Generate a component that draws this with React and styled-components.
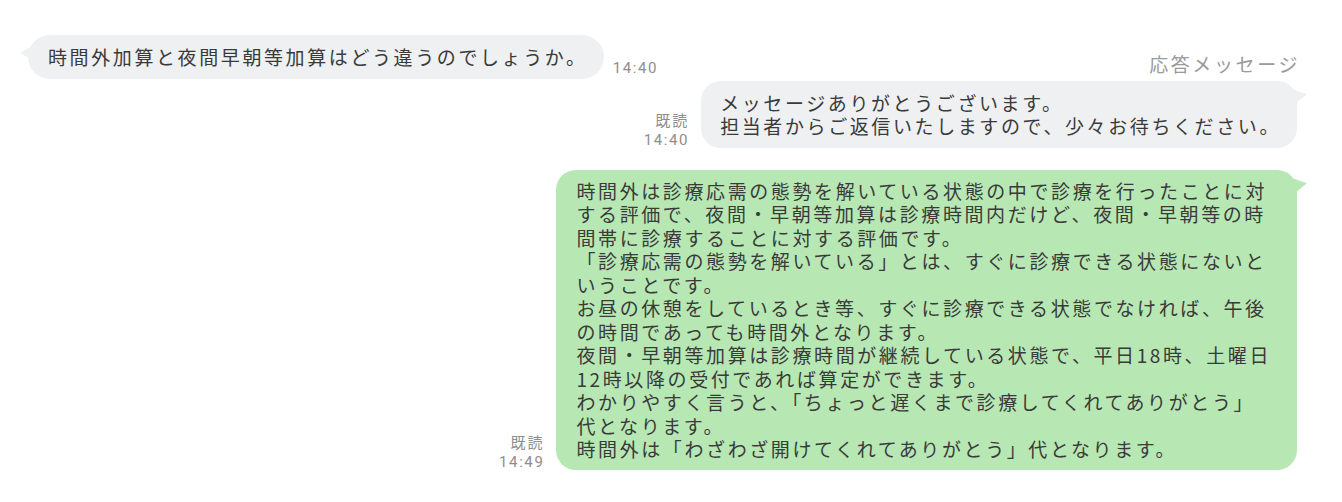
import React from 'react';
import styled, { createGlobalStyle } from 'styled-components';

const GlobalStyle = createGlobalStyle`
    html, body {
        margin: 0;
        padding: 0;
        background: #ffffff;
    }
    body {
        font-family: "Noto Sans CJK JP", "Noto Sans", sans-serif;
        color: #333333;
    }
`;

const Page = styled.div`
    width: 1342px;
    height: 502px;
    box-sizing: border-box;
    padding: 35px 45px 0 28px;
    display: flex;
    flex-direction: column;
    overflow: hidden;
`;

const Row = styled.div`
    display: flex;
    align-items: flex-end;
    justify-content: ${(p) => (p.$mine ? 'flex-end' : 'flex-start')};
    margin-top: ${(p) => p.$gap || 0}px;
`;

const ReplyGroup = styled.div`
    display: flex;
    flex-direction: column;
    margin-top: -27px;
`;

const AutoLabel = styled.div`
    align-self: flex-end;
    font-size: 19px;
    letter-spacing: 2.6px;
    line-height: 24px;
    color: #9a9a9a;
    margin-right: -3px;
`;

const Bubble = styled.div`
    position: relative;
    box-sizing: border-box;
    background: ${(p) => (p.$green ? '#b7e8b4' : '#eef0f2')};
    border-radius: ${(p) => (p.$pill ? '22px' : '20px')};
    padding: ${(p) => p.$pad};
    font-size: 19px;
    letter-spacing: 2.6px;
    line-height: 23.5px;
    color: #3a3a3a;
    white-space: nowrap;

    &::after {
        content: '';
        position: absolute;
        top: ${(p) => (p.$mine ? '9px' : '10px')};
        ${(p) => (p.$mine ? 'right: -10px;' : 'left: -8px;')}
        width: 14px;
        height: 16px;
        background: inherit;
        clip-path: ${(p) =>
            p.$mine
                ? 'polygon(0 0, 100% 30%, 0 100%)'
                : 'polygon(100% 0, 0 50%, 100% 100%)'};
    }
`;

const Line = styled.div``;

const Meta = styled.div`
    display: flex;
    flex-direction: column;
    align-items: ${(p) => (p.$mine ? 'flex-end' : 'flex-start')};
    margin: ${(p) => (p.$mine ? '0 12px -2px 0' : '0 0 1px 9px')};
    font-family: "Noto Sans CJK JP", Roboto, sans-serif;
    font-size: 15px;
    letter-spacing: 2px;
    line-height: 20px;
    color: #8e8e8e;
`;

const Time = styled.span`
    font-family: Roboto, "Liberation Sans", sans-serif;
    font-size: 15px;
    letter-spacing: 1.6px;
`;

const answer = [
    '時間外は診療応需の態勢を解いている状態の中で診療を行ったことに対',
    'する評価で、夜間・早朝等加算は診療時間内だけど、夜間・早朝等の時',
    '間帯に診療することに対する評価です。',
    '「診療応需の態勢を解いている」とは、すぐに診療できる状態にないと',
    'いうことです。',
    'お昼の休憩をしているとき等、すぐに診療できる状態でなければ、午後',
    'の時間であっても時間外となります。',
    '夜間・早朝等加算は診療時間が継続している状態で、平日18時、土曜日',
    '12時以降の受付であれば算定ができます。',
    'わかりやすく言うと、「ちょっと遅くまで診療してくれてありがとう」',
    '代となります。',
    '時間外は「わざわざ開けてくれてありがとう」代となります。',
];

const App = () => (
    <>
        <GlobalStyle />
        <Page>
            <Row>
                <Bubble $pill $pad="10px 16px 10px 20px">
                    時間外加算と夜間早朝等加算はどう違うのでしょうか。
                </Bubble>
                <Meta>
                    <Time>14:40</Time>
                </Meta>
            </Row>

            <ReplyGroup>
                <AutoLabel>応答メッセージ</AutoLabel>
                <Row $mine $gap={5}>
                    <Meta $mine>
                        <span>既読</span>
                        <Time>14:40</Time>
                    </Meta>
                    <Bubble $mine $pad="10px 16px 10px 19px">
                        <Line>メッセージありがとうございます。</Line>
                        <Line>担当者からご返信いたしますので、少々お待ちください。</Line>
                    </Bubble>
                </Row>
            </ReplyGroup>

            <Row $mine $gap={22}>
                <Meta $mine>
                    <span>既読</span>
                    <Time>14:49</Time>
                </Meta>
                <Bubble $mine $green $pad="9px 26px 9px 20px">
                    {answer.map((line) => (
                        <Line key={line}>{line}</Line>
                    ))}
                </Bubble>
            </Row>
        </Page>
    </>
);

export default App;
